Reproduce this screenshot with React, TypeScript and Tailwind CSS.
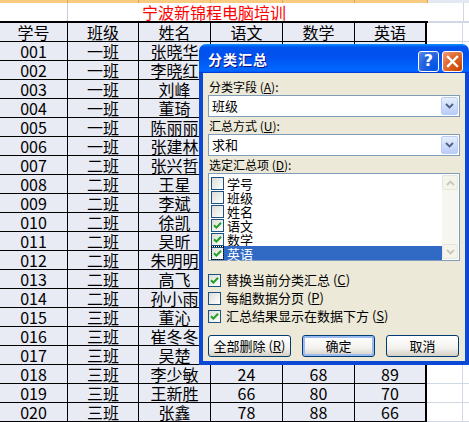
import React from 'react';

// scores are only known for the rows the dialog does not cover
type Student = { id: string; cls: string; name: string; scores?: [number, number, number] };

const students: Student[] = [
  { id: '001', cls: '一班', name: '张晓华' },
  { id: '002', cls: '一班', name: '李晓红' },
  { id: '003', cls: '一班', name: '刘峰' },
  { id: '004', cls: '一班', name: '董琦' },
  { id: '005', cls: '一班', name: '陈丽丽' },
  { id: '006', cls: '一班', name: '张建林' },
  { id: '007', cls: '二班', name: '张兴哲' },
  { id: '008', cls: '二班', name: '王星' },
  { id: '009', cls: '二班', name: '李斌' },
  { id: '010', cls: '二班', name: '徐凯' },
  { id: '011', cls: '二班', name: '吴昕' },
  { id: '012', cls: '二班', name: '朱明明' },
  { id: '013', cls: '二班', name: '高飞' },
  { id: '014', cls: '二班', name: '孙小雨' },
  { id: '015', cls: '三班', name: '董沁' },
  { id: '016', cls: '三班', name: '崔冬冬' },
  { id: '017', cls: '三班', name: '吴楚' },
  { id: '018', cls: '三班', name: '李少敏', scores: [24, 68, 89] },
  { id: '019', cls: '三班', name: '王新胜', scores: [66, 80, 70] },
  { id: '020', cls: '三班', name: '张鑫', scores: [78, 88, 66] },
];

const cellFont = "[font-family:'Noto_Sans_CJK_SC',sans-serif]";

function Row({ cells }: { cells: string[] }) {
  const widths = ['w-[68px]', 'w-[71px]', 'w-[72px]', 'w-[72px]', 'w-[72px]', 'w-[72px]'];
  return (
    <div className="flex h-[19px]">
      {cells.map((c, i) => (
        <div
          key={i}
          className={`${widths[i]} shrink-0 flex items-center justify-center border-b border-black bg-[#e8eaf4] text-[16px] leading-[16px] text-black ${
            i === 5 ? 'border-r-2' : 'border-r'
          } border-r-black`}
        >
          {c}
        </div>
      ))}
      <div className="w-[36px] shrink-0 border-b border-r border-[#d0d7e5] bg-white" />
      <div className="flex-1 border-b border-[#d0d7e5] bg-white" />
    </div>
  );
}

// label with an underlined access key, e.g. 分类字段 (A)
function Mn({ t, k, colon = false }: { t: string; k: string; colon?: boolean }) {
  return (
    <>
      {t} (<u className="underline-offset-1">{k}</u>){colon ? ':' : ''}
    </>
  );
}

function XpCheck({ checked }: { checked: boolean }) {
  return (
    <span className="inline-flex h-[13px] w-[13px] shrink-0 items-center justify-center border border-[#1c5180] bg-[linear-gradient(135deg,#dcdcd7,#ffffff)]">
      {checked && (
        <svg width="9" height="9" viewBox="0 0 9 9">
          <path d="M1 4.2 L3.4 6.6 L8 1.8" fill="none" stroke="#21a121" strokeWidth="2" />
        </svg>
      )}
    </span>
  );
}

function Combo({ value }: { value: string }) {
  return (
    <div className="flex h-[22px] items-center border border-[#7f9db9] bg-white pl-[3px] pr-[1px]">
      <span className="flex-1 text-[13px] leading-[14px]">{value}</span>
      <span className="flex h-[18px] w-[17px] items-center justify-center rounded-[2px] border border-[#bbcdf3] bg-[linear-gradient(to_bottom,#e6eefc,#b9cdf7)]">
        <svg width="9" height="6" viewBox="0 0 9 6">
          <path d="M1 1 L4.5 4.5 L8 1" fill="none" stroke="#4d6185" strokeWidth="1.8" />
        </svg>
      </span>
    </div>
  );
}

function XpButton({ children, primary = false, wide = false }: { children: React.ReactNode; primary?: boolean; wide?: boolean }) {
  return (
    <div
      className={`flex h-[22px] items-center justify-center rounded-[3px] border border-[#003c74] bg-[linear-gradient(to_bottom,#ffffff,#f3f2ee_60%,#d6d0c5)] text-[13px] leading-[14px] ${
        wide ? 'w-[83px]' : 'w-[73px]'
      } ${primary ? 'shadow-[inset_0_0_0_2px_#9cbbf0]' : ''}`}
    >
      {children}
    </div>
  );
}

const fields: { label: string; checked: boolean }[] = [
  { label: '学号', checked: false },
  { label: '班级', checked: false },
  { label: '姓名', checked: false },
  { label: '语文', checked: true },
  { label: '数学', checked: true },
  { label: '英语', checked: true },
];

function Dialog() {
  return (
    <div className={`absolute left-[199px] top-[44px] flex h-[321px] w-[270px] flex-col ${cellFont}`}>
      <div className="flex h-[29px] items-center rounded-t-[7px] bg-[linear-gradient(to_bottom,#0997ff_0%,#0053ee_10%,#0050ee_40%,#0066ff_88%,#0066ff_93%,#005bff_95%,#003dd7_97%,#003dd7_100%)] pl-[9px] pr-[6px]">
        <span className="flex-1 text-[14px] font-bold leading-[16px] tracking-[1px] text-white [text-shadow:1px_1px_#0f1089]">分类汇总</span>
        <span className="mr-[3px] mt-[5px] flex h-[21px] w-[21px] items-center justify-center rounded-[3px] border border-white bg-[radial-gradient(circle_at_80%_80%,#0054e9,#2663de_55%,#5a8cf2_100%)] text-[16px] font-bold leading-none text-white [font-family:'DejaVu_Sans',sans-serif]">
          ?
        </span>
        <span className="mt-[5px] flex h-[21px] w-[21px] items-center justify-center rounded-[3px] border border-white bg-[radial-gradient(circle_at_90%_90%,#cc4600,#dc6527_55%,#f0a081_100%)]">
          <svg width="13" height="13" viewBox="0 0 13 13">
            <path d="M2 2 L11 11 M11 2 L2 11" stroke="#fff" strokeWidth="2.4" strokeLinecap="square" />
          </svg>
        </span>
      </div>
      <div className="flex flex-1 flex-col border-x-4 border-b-4 border-[#0b48d6] bg-[#ece9d8] px-[5px] pt-[5px] text-[12px] leading-[14px] text-black">
        <div className="flex h-[17px] items-center pl-[1px]">
          <span>
            <Mn t="分类字段" k="A" colon />
          </span>
        </div>
        <Combo value="班级" />
        <div className="flex h-[17px] items-center pl-[1px]">
          <span>
            <Mn t="汇总方式" k="U" colon />
          </span>
        </div>
        <Combo value="求和" />
        <div className="flex h-[17px] items-center pl-[1px]">
          <span>
            <Mn t="选定汇总项" k="D" colon />
          </span>
        </div>
        <div className="flex h-[88px] border border-[#7f9db9] bg-white p-[1px]">
          <div className="flex flex-1 flex-col pl-[1px] pt-[1px]">
            {fields.map((f, i) => {
              const sel = i === fields.length - 1;
              return (
                <div key={f.label} className="flex h-[14px] items-center">
                  <span className={`flex h-[14px] items-center ${sel ? 'outline outline-1 outline-dotted outline-black -outline-offset-1' : ''}`}>
                    <XpCheck checked={f.checked} />
                  </span>
                  <span
                    className={`flex h-[14px] flex-1 items-center pl-[3px] text-[13px] leading-[13px] ${
                      sel ? 'bg-[#316ac5] text-white' : ''
                    }`}
                  >
                    {f.label}
                  </span>
                </div>
              );
            })}
          </div>
          <div className="flex w-[16px] flex-col bg-[#f6f5f0]">
            <span className="flex h-[15px] items-center justify-center rounded-[2px] border border-[#e6e6df] bg-[#f5f4ea]">
              <svg width="9" height="6" viewBox="0 0 9 6">
                <path d="M1 5 L4.5 1.5 L8 5" fill="none" stroke="#c9c7ba" strokeWidth="1.8" />
              </svg>
            </span>
            <span className="flex-1" />
            <span className="flex h-[15px] items-center justify-center rounded-[2px] border border-[#e6e6df] bg-[#f5f4ea]">
              <svg width="9" height="6" viewBox="0 0 9 6">
                <path d="M1 1 L4.5 4.5 L8 1" fill="none" stroke="#c9c7ba" strokeWidth="1.8" />
              </svg>
            </span>
          </div>
        </div>
        <div className="mt-[10px] flex flex-col text-[13px] leading-[14px]">
          <div className="flex h-[18px] items-center gap-[5px]">
            <XpCheck checked />
            <span>
              <Mn t="替换当前分类汇总" k="C" />
            </span>
          </div>
          <div className="flex h-[18px] items-center gap-[5px]">
            <XpCheck checked={false} />
            <span>
              <Mn t="每組数据分页" k="P" />
            </span>
          </div>
          <div className="flex h-[18px] items-center gap-[5px]">
            <XpCheck checked />
            <span>
              <Mn t="汇总结果显示在数据下方" k="S" />
            </span>
          </div>
        </div>
        <div className="mt-[10px] flex gap-[11px]">
          <XpButton wide>
            <span>
              <Mn t="全部删除" k="R" />
            </span>
          </XpButton>
          <XpButton primary>确定</XpButton>
          <XpButton>取消</XpButton>
        </div>
      </div>
    </div>
  );
}

export default function App() {
  return (
    <div className={`relative h-[422px] w-[469px] overflow-hidden bg-white ${cellFont}`}>
      {/* bottom edge of the selected column headers A-F */}
      <div className="flex h-[3px]">
        {['w-[68px]', 'w-[71px]', 'w-[72px]', 'w-[72px]', 'w-[72px]', 'w-[73px]'].map((w, i) => (
          <div key={i} className={`${w} border-r border-[#e0a45a] bg-[#f8cb80]`} />
        ))}
        <div className="flex-1 bg-[#e3e9f3]" />
      </div>
      {/* title row */}
      <div className="relative flex h-[18px]">
        <div className="w-[68px] border-r border-[#c8cfdc]" />
        <div className="flex-1" />
        <div className="absolute left-0 top-0 flex h-[18px] w-[428px] items-center justify-center text-[16px] leading-[16px] text-[#ff0000]">
          宁波新锦程电脑培训
        </div>
        <div className="absolute left-[463px] top-0 h-[18px] border-l border-[#d0d7e5]" />
      </div>
      <div className="flex h-[2px]">
        <div className="w-[428px] bg-black" />
        <div className="flex-1 bg-[#d0d7e5]" />
      </div>
      <Row cells={['学号', '班级', '姓名', '语文', '数学', '英语']} />
      {students.map((s) => (
        <Row key={s.id} cells={[s.id, s.cls, s.name, ...(s.scores ? s.scores.map(String) : ['', '', ''])]} />
      ))}
      <Dialog />
    </div>
  );
}
